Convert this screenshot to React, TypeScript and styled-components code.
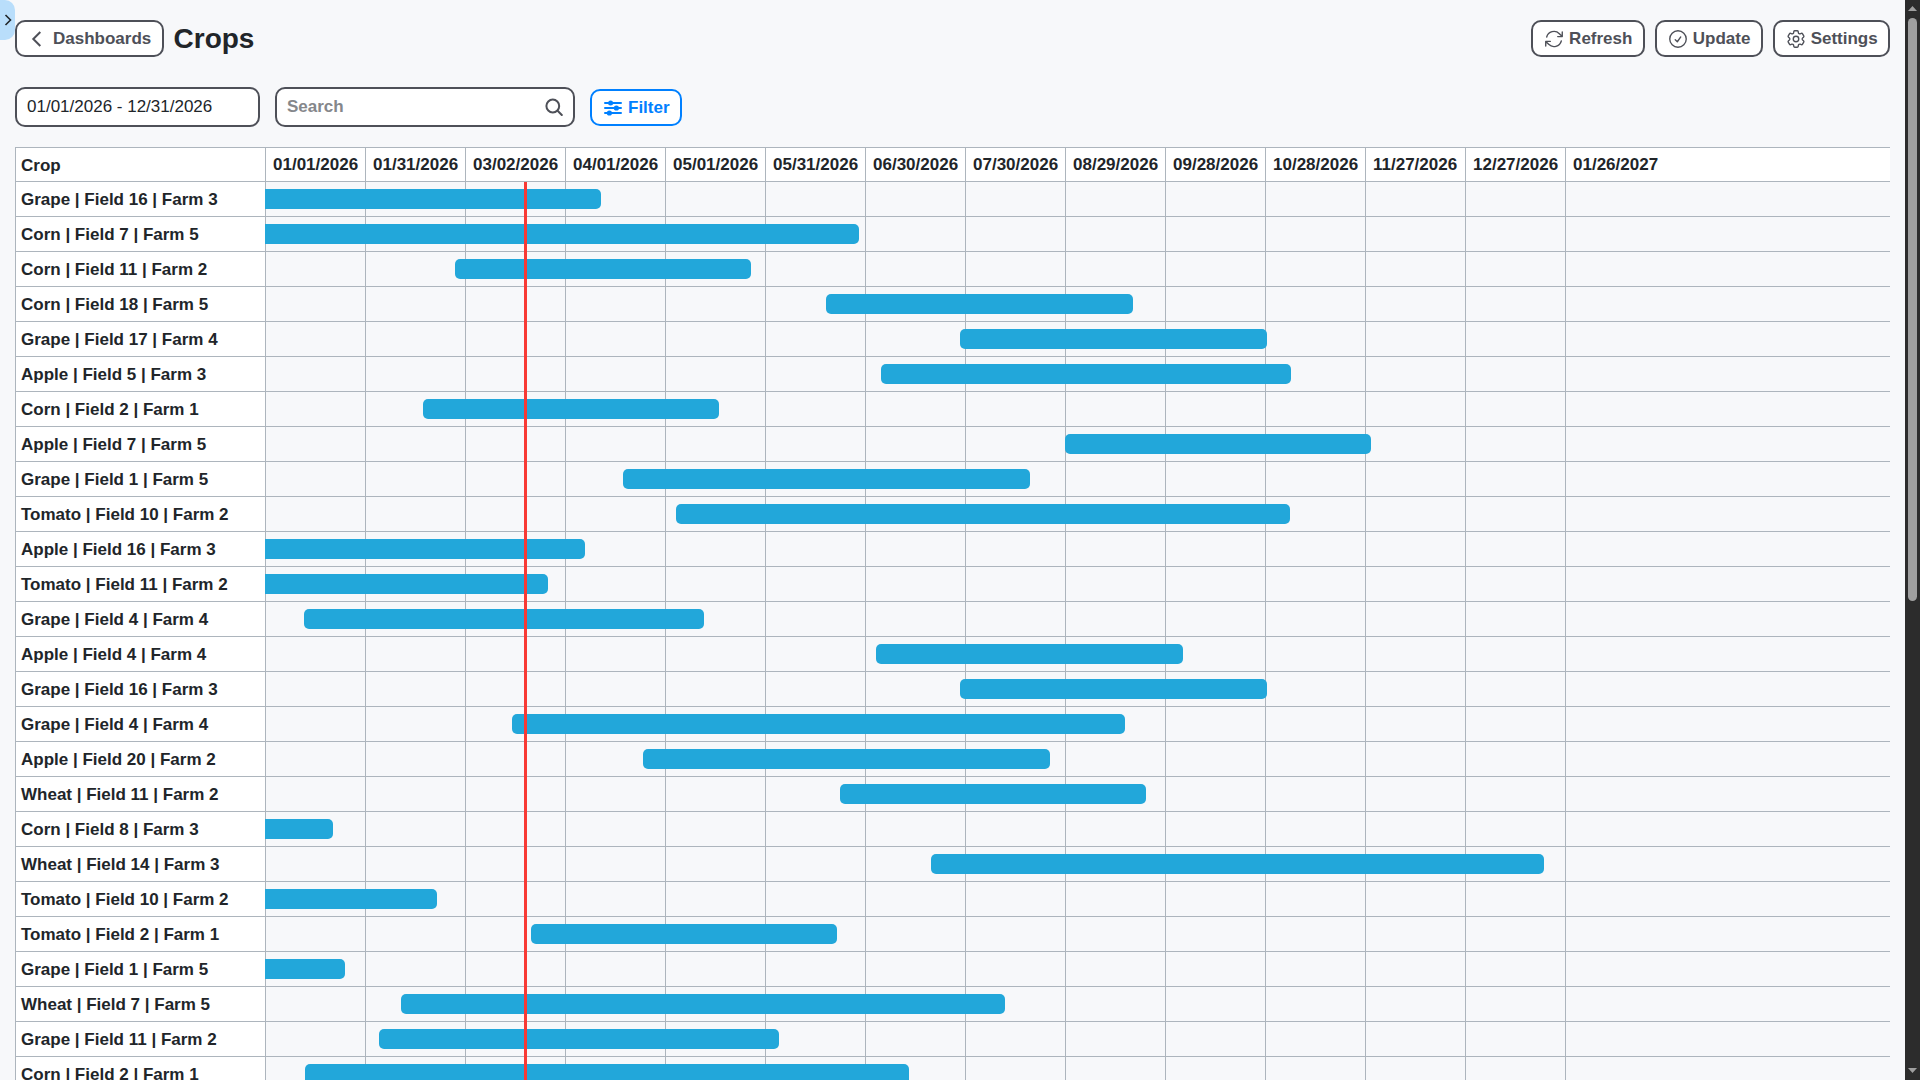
// global modules
import { ReactNode } from 'react';
import styled, { createGlobalStyle } from 'styled-components';
import {
  HiOutlineArrowPath,
  HiOutlineCheckCircle,
  HiOutlineCog6Tooth,
} from 'react-icons/hi2';

const GlobalStyle = createGlobalStyle`
  * {
    box-sizing: border-box;
  }

  body {
    margin: 0;
    overflow: hidden;
    color: #212529;
    background: #f7f8fa;
    font: 17px/20px 'Liberation Sans', Arial, sans-serif;
  }
`;

const DAY_WIDTH = 100 / 30;

const dates = [
  '01/01/2026',
  '01/31/2026',
  '03/02/2026',
  '04/01/2026',
  '05/01/2026',
  '05/31/2026',
  '06/30/2026',
  '07/30/2026',
  '08/29/2026',
  '09/28/2026',
  '10/28/2026',
  '11/27/2026',
  '12/27/2026',
  '01/26/2027',
];

interface Crop {
  name: string;
  // offset and length on the timeline, px
  start: number;
  width: number;
}

const crops: Crop[] = [
  { name: 'Grape | Field 16 | Farm 3', start: 0, width: 336 },
  { name: 'Corn | Field 7 | Farm 5', start: 0, width: 594 },
  { name: 'Corn | Field 11 | Farm 2', start: 190, width: 296 },
  { name: 'Corn | Field 18 | Farm 5', start: 561, width: 307 },
  { name: 'Grape | Field 17 | Farm 4', start: 695, width: 307 },
  { name: 'Apple | Field 5 | Farm 3', start: 616, width: 410 },
  { name: 'Corn | Field 2 | Farm 1', start: 158, width: 296 },
  { name: 'Apple | Field 7 | Farm 5', start: 800, width: 306 },
  { name: 'Grape | Field 1 | Farm 5', start: 358, width: 407 },
  { name: 'Tomato | Field 10 | Farm 2', start: 411, width: 614 },
  { name: 'Apple | Field 16 | Farm 3', start: 0, width: 320 },
  { name: 'Tomato | Field 11 | Farm 2', start: 0, width: 283 },
  { name: 'Grape | Field 4 | Farm 4', start: 39, width: 400 },
  { name: 'Apple | Field 4 | Farm 4', start: 611, width: 307 },
  { name: 'Grape | Field 16 | Farm 3', start: 695, width: 307 },
  { name: 'Grape | Field 4 | Farm 4', start: 247, width: 613 },
  { name: 'Apple | Field 20 | Farm 2', start: 378, width: 407 },
  { name: 'Wheat | Field 11 | Farm 2', start: 575, width: 306 },
  { name: 'Corn | Field 8 | Farm 3', start: 0, width: 68 },
  { name: 'Wheat | Field 14 | Farm 3', start: 666, width: 613 },
  { name: 'Tomato | Field 10 | Farm 2', start: 0, width: 172 },
  { name: 'Tomato | Field 2 | Farm 1', start: 266, width: 306 },
  { name: 'Grape | Field 1 | Farm 5', start: 0, width: 80 },
  { name: 'Wheat | Field 7 | Farm 5', start: 136, width: 604 },
  { name: 'Grape | Field 11 | Farm 2', start: 114, width: 400 },
  { name: 'Corn | Field 2 | Farm 1', start: 40, width: 604 },
];

const Page = styled.div`
  display: flex;
  height: 1080px;
  overflow: hidden;
`;

const Main = styled.main`
  flex: 1;
  min-width: 0;
  padding: 20px 15px 0;
`;

const Toolbar = styled.header`
  display: flex;
  align-items: center;
  height: 37px;
`;

const Title = styled.h1`
  flex: 1;
  margin: 0 0 0 10px;
  font-size: 28px;
  line-height: 36px;
`;

const Actions = styled.div`
  display: flex;
  gap: 10px;
`;

const Button = styled.button<{ $primary?: boolean }>`
  display: flex;
  align-items: center;
  gap: 4px;
  height: 37px;
  padding: 0 10.3px 0 10px;
  border: 2px solid ${({ $primary }) => ($primary ? '#0080ff' : '#4e5058')};
  border-radius: 10px;
  color: ${({ $primary }) => ($primary ? '#0080ff' : '#4e5058')};
  background: #fff;
  font: bold 17px/20px 'Liberation Sans', Arial, sans-serif;

  svg {
    flex: none;
    width: 22px;
    height: 22px;
  }
`;

const Filters = styled.div`
  display: flex;
  gap: 15px;
  align-items: center;
  height: 40px;
  margin: 30px 0 20px;

  ${Button} {
    margin-top: 1px;
  }
`;

const Field = styled.div<{ $width: number }>`
  display: flex;
  align-items: center;
  justify-content: space-between;
  width: ${({ $width }) => $width}px;
  height: 40px;
  padding: 0 10px 1px;
  border: 2px solid #4e5058;
  border-radius: 10px;
  background: #fff;
`;

const Placeholder = styled.span`
  color: #85878b;
  font-weight: bold;
`;

const Table = styled.section`
  position: relative;
  border-top: 1px solid #adb5bd;
  border-left: 1px solid #adb5bd;
  font-weight: bold;
`;

const Row = styled.div`
  display: flex;
  height: 35px;
  border-bottom: 1px solid #adb5bd;
`;

const HeadRow = styled(Row)`
  height: 34px;
  background: #fff;
`;

const NameCell = styled.div`
  flex: none;
  width: 249px;
  padding: 8px 5px 0;
  background: #fff;
  white-space: nowrap;
`;

const Track = styled.div`
  position: relative;
  display: flex;
  flex: 1;
`;

const Cell = styled.div`
  flex: none;
  width: 100px;
  padding: 7px 0 0 7px;
  border-left: 1px solid #adb5bd;

  &:last-of-type {
    flex: 1;
  }
`;

const Bar = styled.span<{ $clipped: boolean }>`
  position: absolute;
  top: 7px;
  height: 20px;
  border-radius: ${({ $clipped }) => ($clipped ? '0 5px 5px 0' : '5px')};
  background: #22a7da;
`;

const Today = styled.div`
  position: absolute;
  top: 34px;
  bottom: 0;
  width: 3px;
  background: #f83a35;
`;

const MenuTab = styled.div`
  position: absolute;
  top: 0;
  left: 0;
  display: flex;
  align-items: center;
  justify-content: flex-end;
  width: 15px;
  height: 40px;
  padding-right: 3px;
  border-radius: 0 10px 10px 0;
  background: #b9defb;
`;

const Scrollbar = styled.aside`
  display: flex;
  flex-direction: column;
  align-items: center;
  justify-content: space-between;
  width: 15px;
  padding: 6px 0 7px;
  background: #2c2c2c;
`;

const Thumb = styled.div`
  width: 9px;
  height: 583px;
  margin: 7px 0 auto;
  border-radius: 5px;
  background: #9f9f9f;
`;

const Arrow = ({ d }: { d: string }) => (
  <svg width="9" height="5" viewBox="0 0 9 5">
    <path d={d} fill="#9f9f9f" />
  </svg>
);

const BackIcon = () => (
  <svg viewBox="0 0 22 22" fill="none" stroke="currentColor" strokeWidth="2">
    <path d="M13.3 4L6.3 11L13.3 18" />
  </svg>
);

const SearchIcon = () => (
  <svg
    width="18"
    height="18"
    fill="none"
    stroke="#4e5058"
    strokeLinecap="round"
  >
    <circle cx="7.8" cy="8" r="6.4" strokeWidth="2" />
    <path d="M12.6 12.8L16.8 17" strokeWidth="2" />
  </svg>
);

const FilterIcon = () => (
  <svg viewBox="0 0 22 22" fill="currentColor" stroke="currentColor">
    <path
      d="M3 6h16M3 11h16M3 16h16"
      strokeWidth="2"
      strokeLinecap="round"
    />
    <circle cx="8.6" cy="6" r="2.5" stroke="none" />
    <circle cx="14.4" cy="11" r="2.6" stroke="none" />
    <circle cx="7.4" cy="16" r="2.6" stroke="none" />
  </svg>
);

interface ActionButtonProps {
  icon: ReactNode;
  label: string;
  primary?: boolean;
}

const ActionButton = ({ icon, label, primary }: ActionButtonProps) => (
  <Button type="button" $primary={primary}>
    {icon}
    {label}
  </Button>
);

const CropRow = ({ name, start, width }: Crop) => (
  <Row>
    <NameCell>{name}</NameCell>
    <Track>
      {dates.map((date) => (
        <Cell key={date} />
      ))}
      <Bar $clipped={start === 0} style={{ left: start, width }} />
    </Track>
  </Row>
);

const App = () => (
  <>
    <GlobalStyle />
    <Page>
      <Main>
        <Toolbar>
          <ActionButton icon={<BackIcon />} label="Dashboards" />
          <Title>Crops</Title>
          <Actions>
            <ActionButton icon={<HiOutlineArrowPath />} label="Refresh" />
            <ActionButton icon={<HiOutlineCheckCircle />} label="Update" />
            <ActionButton icon={<HiOutlineCog6Tooth />} label="Settings" />
          </Actions>
        </Toolbar>

        <Filters>
          <Field $width={245}>01/01/2026 - 12/31/2026</Field>
          <Field $width={300}>
            <Placeholder>Search</Placeholder>
            <SearchIcon />
          </Field>
          <ActionButton primary icon={<FilterIcon />} label="Filter" />
        </Filters>

        <Table>
          <HeadRow>
            <NameCell>Crop</NameCell>
            <Track>
              {dates.map((date) => (
                <Cell key={date}>{date}</Cell>
              ))}
            </Track>
          </HeadRow>
          {crops.map((crop, index) => (
            <CropRow key={index} {...crop} />
          ))}
          <Today style={{ left: Math.round(249 + 77.8 * DAY_WIDTH) }} />
        </Table>
      </Main>

      <Scrollbar>
        <Arrow d="M0 5L4.5 0L9 5z" />
        <Thumb />
        <Arrow d="M0 0h9L4.5 5z" />
      </Scrollbar>
    </Page>

    <MenuTab>
      <svg width="8" height="12" fill="none" stroke="#212529" strokeWidth="1.6">
        <path d="M1.5 1L6.5 6L1.5 11" />
      </svg>
    </MenuTab>
  </>
);

export default App;
